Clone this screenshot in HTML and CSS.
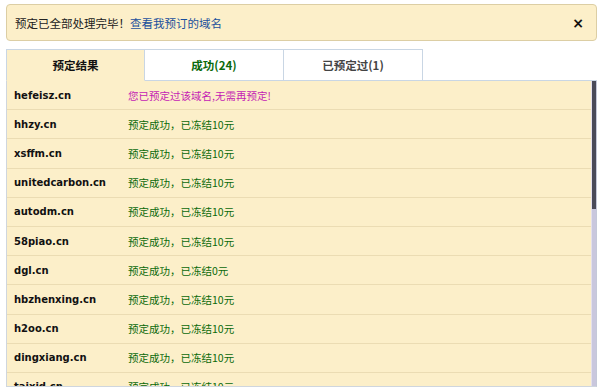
FILE: index.html
```html
<!DOCTYPE html>
<html lang="zh-CN">
<head>
    <meta charset="UTF-8">
    <meta name="viewport" content="width=device-width, initial-scale=1.0">
    <title>预定结果</title>
    <link rel="stylesheet" href="styles.css">
</head>
<body>
    <div class="alert">
        <span>预定已全部处理完毕！<a href="#">查看我预订的域名</a></span>
        <span class="close">×</span>
    </div>
    <ul class="tabs">
        <li class="active">预定结果</li>
        <li class="ok">成功(24)</li>
        <li class="done">已预定过(1)</li>
    </ul>
    <div class="panel">
        <div class="list">
            <div class="row"><b>hefeisz.cn</b><span class="dup">您已预定过该域名,无需再预定!</span></div>
            <div class="row"><b>hhzy.cn</b><span class="ok">预定成功，已冻结10元</span></div>
            <div class="row"><b>xsffm.cn</b><span class="ok">预定成功，已冻结10元</span></div>
            <div class="row"><b>unitedcarbon.cn</b><span class="ok">预定成功，已冻结10元</span></div>
            <div class="row"><b>autodm.cn</b><span class="ok">预定成功，已冻结10元</span></div>
            <div class="row"><b>58piao.cn</b><span class="ok">预定成功，已冻结10元</span></div>
            <div class="row"><b>dgl.cn</b><span class="ok">预定成功，已冻结0元</span></div>
            <div class="row"><b>hbzhenxing.cn</b><span class="ok">预定成功，已冻结10元</span></div>
            <div class="row"><b>h2oo.cn</b><span class="ok">预定成功，已冻结10元</span></div>
            <div class="row"><b>dingxiang.cn</b><span class="ok">预定成功，已冻结10元</span></div>
            <div class="row"><b>taixid.cn</b><span class="ok">预定成功，已冻结10元</span></div>
        </div>
        <div class="scrollbar"><div class="thumb"></div></div>
    </div>
</body>
</html>
```

FILE: styles.css
```css
* {
    padding: 0;
    margin: 0;
    box-sizing: border-box;
}

body {
    padding: 4px 3px 0 6px;
    font-family: "Noto Sans CJK SC", sans-serif;
    font-size: 11.5px;
    color: #222;
    background: #fff;
}

.alert {
    display: flex;
    justify-content: space-between;
    align-items: center;
    height: 37px;
    padding: 0 12px 0 8px;
    background: #fcefc9;
    border: 1px solid #dccea4;
    border-radius: 4px;
}

.alert a {
    color: #1a4f9c;
    text-decoration: none;
}

.close {
    font-family: "DejaVu Sans", sans-serif;
    font-weight: bold;
    font-size: 14px;
    color: #111;
}

.tabs {
    display: flex;
    margin-top: 8px;
    list-style-type: none;
    border-bottom: 1px solid #c9d6e4;
}

.tabs li {
    width: 139px;
    height: 32px;
    line-height: 31px;
    margin-bottom: -1px;
    text-align: center;
    font-weight: bold;
    border: 1px solid #c9d6e4;
    border-left: none;
    background: #fff;
}

.tabs li:first-child {
    border-left: 1px solid #c9d6e4;
}

.tabs li.active {
    background: #fcefc9;
    border-bottom-color: #fcefc9;
    color: #111;
}

.tabs li.ok {
    color: #0b6a0b;
}

.tabs li.done {
    color: #444;
}

.panel {
    display: flex;
    height: 306px;
    background: #fcefc9;
    border: 1px solid #cfd6de;
    border-top: none;
    border-right-color: #c4c8d8;
}

.list {
    flex: 1;
    overflow: hidden;
}

.scrollbar {
    width: 5px;
    background: #c9c7dd;
    border-left: 1px solid #e4e0ea;
}

.thumb {
    height: 128px;
    background: #4a4a58;
}

.row {
    display: flex;
    align-items: center;
    height: 29.2px;
    padding-left: 7px;
    border-bottom: 1px solid #ebdcb3;
}

.row b {
    width: 114px;
    font-family: "DejaVu Sans", sans-serif;
    font-size: 10px;
    color: #111;
}

.row span {
    font-size: 10.5px;
}

.row .ok {
    color: #0a6a0a;
}

.row .dup {
    color: #c41bb4;
}
```
